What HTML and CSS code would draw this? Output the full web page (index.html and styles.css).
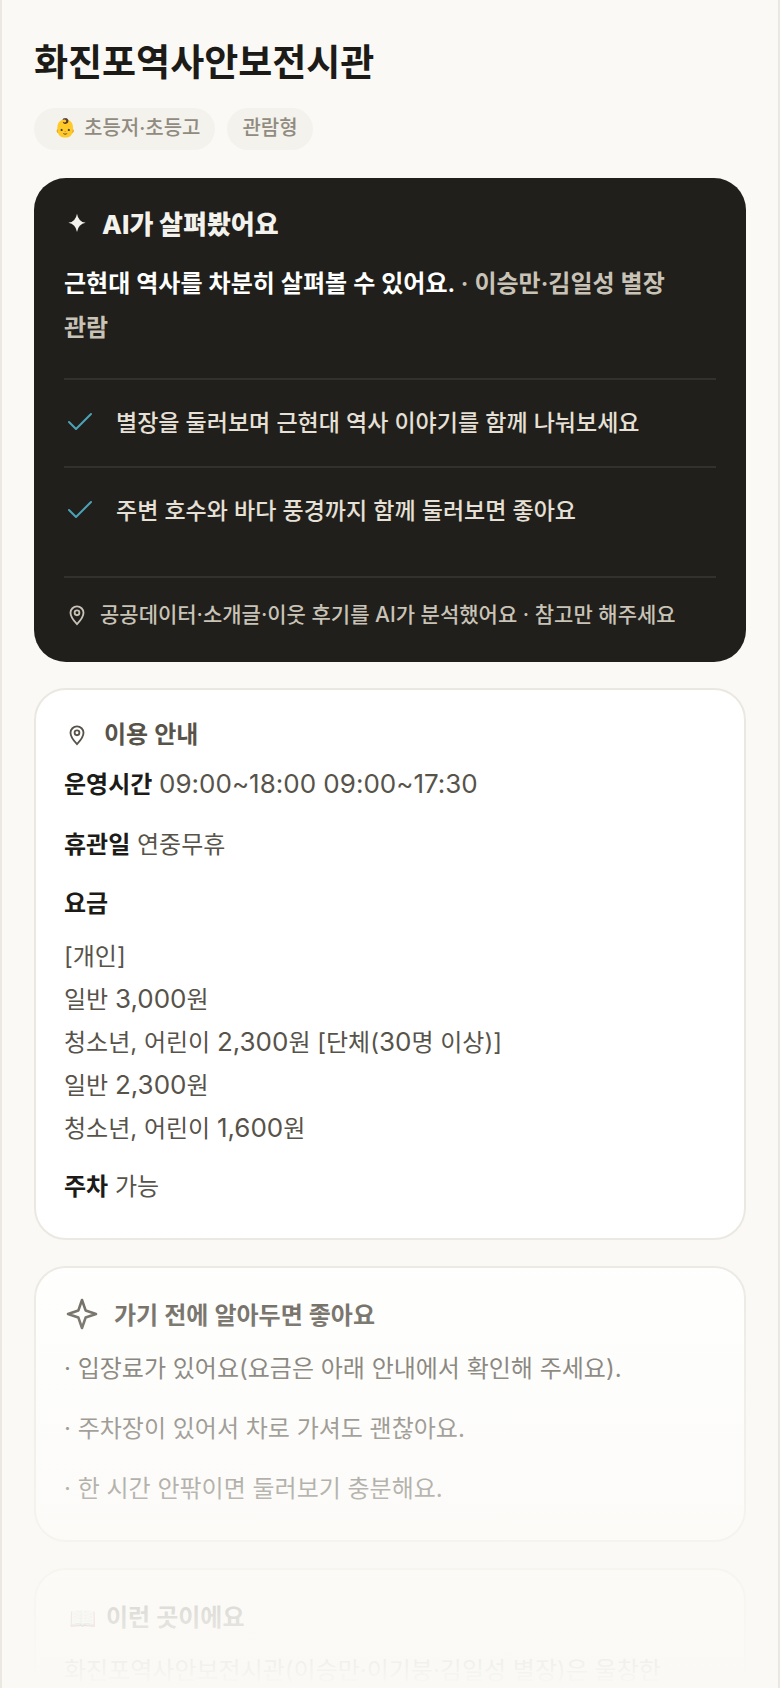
FILE: index.html
```html
<!DOCTYPE html>
<html lang="ko">
<head>
    <meta charset="UTF-8">
    <meta name="viewport" content="width=device-width, initial-scale=1.0">
    <title>화진포역사안보전시관</title>
    <link rel="stylesheet" href="styles.css">
</head>
<body>
    <main class="page">
        <h1>화진포역사안보전시관</h1>
        <div class="chips">
            <span class="chip"><span class="emoji">👶</span>초등저·초등고</span>
            <span class="chip">관람형</span>
        </div>

        <section class="card ai-card">
            <h2 class="ai-title">
                <svg class="icon" viewBox="0 0 24 24" fill="currentColor"><path d="M12 1.5Q13.2 8.8 20 10Q13.2 11.2 12 18.5Q10.8 11.2 4 10Q10.8 8.8 12 1.5Z"/></svg>
                AI가 살펴봤어요
            </h2>
            <p class="summary"><strong>근현대 역사를 차분히 살펴볼 수 있어요.</strong> · 이승만·김일성 별장 관람</p>
            <ul class="tips">
                <li>
                    <svg class="check" viewBox="0 0 32 32" fill="none" stroke="currentColor" stroke-width="2" stroke-linecap="round" stroke-linejoin="round"><path d="M5 15l7 7L27 7"/></svg>
                    별장을 둘러보며 근현대 역사 이야기를 함께 나눠보세요
                </li>
                <li>
                    <svg class="check" viewBox="0 0 32 32" fill="none" stroke="currentColor" stroke-width="2" stroke-linecap="round" stroke-linejoin="round"><path d="M5 15l7 7L27 7"/></svg>
                    주변 호수와 바다 풍경까지 함께 둘러보면 좋아요
                </li>
            </ul>
            <p class="source">
                <svg class="icon" viewBox="0 0 24 24" fill="none" stroke="currentColor" stroke-width="1.7"><path d="M12 20.4C8.6 17 6 13.8 6 10a6 6 0 0 1 12 0C18 13.8 15.4 17 12 20.4z"/><circle cx="12" cy="10" r="2.2"/></svg>
                공공데이터·소개글·이웃 후기를 AI가 분석했어요 · 참고만 해주세요
            </p>
        </section>

        <section class="card">
            <h2 class="card-title">
                <svg class="icon" viewBox="0 0 24 24" fill="none" stroke="currentColor" stroke-width="1.7"><path d="M12 20.4C8.6 17 6 13.8 6 10a6 6 0 0 1 12 0C18 13.8 15.4 17 12 20.4z"/><circle cx="12" cy="10" r="2.2"/></svg>
                이용 안내
            </h2>
            <div class="rows">
                <p><strong>운영시간</strong> <span class="num">09:00~18:00 09:00~17:30</span></p>
                <p><strong>휴관일</strong> 연중무휴</p>
                <div>
                    <strong>요금</strong>
                    <div class="fees">[개인]<br>
                    일반 <span class="num">3,000</span>원<br>
                    청소년, 어린이 <span class="num">2,300</span>원 [단체(<span class="num">30</span>명 이상)]<br>
                    일반 <span class="num">2,300</span>원<br>
                    청소년, 어린이 <span class="num">1,600</span>원</div>
                </div>
                <p><strong>주차</strong> 가능</p>
            </div>
        </section>

        <section class="card">
            <h2 class="card-title">
                <svg class="sparkle" viewBox="0 0 36 40" fill="none" stroke="currentColor" stroke-width="2.6" stroke-linejoin="round"><path d="M18 4L21.6 14.4L32 18L21.6 21.6L18 32L14.4 21.6L4 18L14.4 14.4Z"/></svg>
                가기 전에 알아두면 좋아요
            </h2>
            <div class="rows">
                <p>· 입장료가 있어요(요금은 아래 안내에서 확인해 주세요).</p>
                <p>· 주차장이 있어서 차로 가셔도 괜찮아요.</p>
                <p>· 한 시간 안팎이면 둘러보기 충분해요.</p>
            </div>
        </section>

        <section class="card">
            <h2 class="card-title about-title"><span class="emoji">📖</span>이런 곳이에요</h2>
            <div class="rows">
                <p>화진포역사안보전시관(이승만·이기붕·김일성 별장)은 울창한</p>
            </div>
        </section>

        <div class="fade"></div>
    </main>
</body>
</html>
```

FILE: styles.css
```css
* {
    box-sizing: border-box;
}
body {
    margin: 0;
    background-color: #faf9f5;
    color: #57534a;
    font-family: Inter, 'Noto Sans CJK KR', sans-serif;
    font-size: 24px;
    line-height: 43px;
    word-break: keep-all;
}
h1, h2, p, ul {
    margin: 0;
    padding: 0;
}
.page {
    position: relative;
    display: flex;
    flex-direction: column;
    height: 100vh;
    overflow: hidden;
    padding: 36px 32px 0;
    border-left: 2px solid #eae8e1;
    border-right: 2px solid #eae8e1;
}
h1 {
    color: #1c1b18;
    font-size: 37px;
    font-weight: 700;
    line-height: 54px;
}
.chips {
    display: flex;
    gap: 12px;
    margin: 18px 0 28px;
}
.chip {
    display: flex;
    padding: 0 15px 2px;
    border-radius: 21px;
    background-color: #f3f2ed;
    color: #918b7f;
    font-size: 20px;
    font-weight: 500;
    line-height: 40px;
}
.emoji {
    display: inline-block;
    width: 32px;
    margin-right: 3px;
    font-size: 18px;
    text-align: center;
}
.card {
    flex-shrink: 0;
    margin-bottom: 26px;
    padding: 28px;
    border: 2px solid #eae8e1;
    border-radius: 32px;
    background-color: #fff;
}
.ai-card {
    padding: 30px;
    border: none;
    background-color: #201f1b;
    color: #c9c3b7;
}
.icon {
    flex-shrink: 0;
    width: 26px;
    height: 26px;
}
.ai-title {
    display: flex;
    align-items: center;
    gap: 12px;
    color: #f3f2ed;
    font-size: 26px;
    font-weight: 800;
    line-height: 34px;
}
.summary {
    margin: 20px 0 28px;
    padding-right: 20px;
    font-weight: 600;
    line-height: 44px;
}
.summary strong {
    color: #fff;
    font-weight: 600;
}
.tips {
    margin-bottom: 22px;
    list-style: none;
}
.tips li {
    display: flex;
    align-items: center;
    gap: 20px;
    height: 88px;
    border-top: 2px solid #32312d;
    color: #e6e0d6;
    font-size: 23px;
    font-weight: 500;
}
.check {
    flex-shrink: 0;
    width: 32px;
    height: 32px;
    color: #4ba3b7;
}
.source {
    display: flex;
    align-items: center;
    gap: 10px;
    padding-top: 20px;
    border-top: 2px solid #32312d;
    font-size: 21px;
    font-weight: 500;
    line-height: 34px;
}
.card-title {
    display: flex;
    align-items: center;
    gap: 14px;
    margin-bottom: 10px;
    font-size: 24px;
    font-weight: 600;
    line-height: 34px;
}
.about-title {
    gap: 10px;
    line-height: 40px;
}
.about-title .emoji {
    margin-right: 0;
    padding-left: 4px;
    font-size: 22px;
}
.sparkle {
    flex-shrink: 0;
    width: 36px;
    height: 40px;
}
.rows {
    display: flex;
    flex-direction: column;
    gap: 14px;
}
.rows p {
    line-height: 46px;
}
.rows strong {
    color: #1c1b18;
    font-weight: 600;
}
.fees {
    margin-top: 10px;
}
.num {
    font-size: 26px;
    line-height: 1;
}
/* fades the rest of the page out towards the bottom */
.fade {
    position: absolute;
    left: -2px;
    right: -2px;
    bottom: 0;
    height: 476px;
    background: linear-gradient(to bottom, rgba(250, 249, 245, 0), #faf9f5);
    pointer-events: none;
}
```
